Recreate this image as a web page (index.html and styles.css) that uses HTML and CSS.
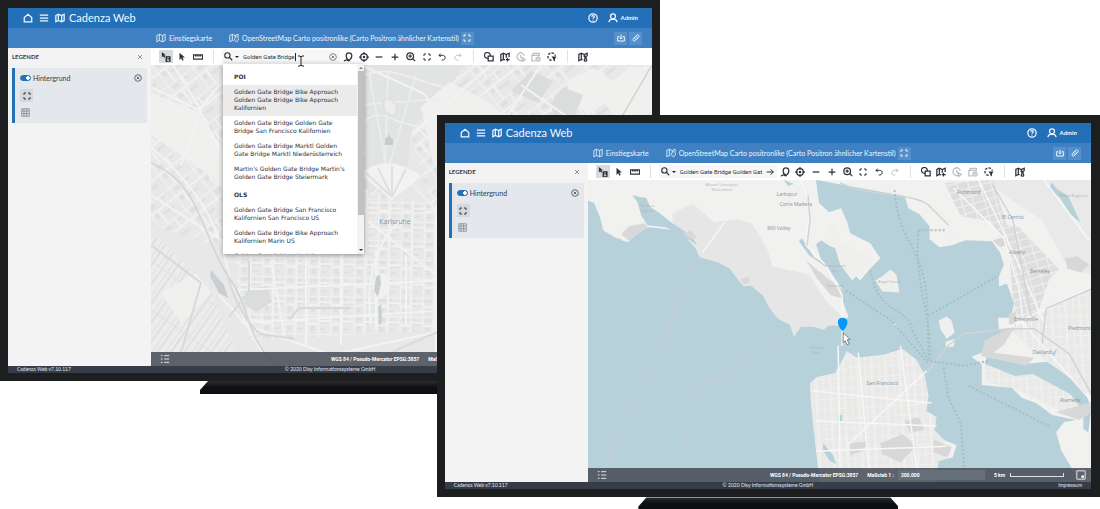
FILE: index.html
```html
<!DOCTYPE html>
<html lang="de">
<head>
<meta charset="utf-8">
<title>Cadenza Web</title>
<link rel="stylesheet" href="styles.css">
</head>
<body>
<svg class="defs" aria-hidden="true">
  <defs>
    <symbol id="home" viewBox="0 0 24 24"><path d="M3 11 12 3l9 8v10H3z"/></symbol>
    <symbol id="menu" viewBox="0 0 24 24"><path d="M2 5h20M2 12h20M2 19h20"/></symbol>
    <symbol id="map" viewBox="0 0 24 24"><path d="M2 6 8 3l8 3 6-3v15l-6 3-8-3-6 3zM8 3v15M16 6v15"/></symbol>
    <symbol id="mappin" viewBox="0 0 24 24"><path d="M11 19l-3-1-6 3V6l6-3 7 3 7-3v6M8 3v15M15 6v4M18 22l-4-5a5 5 0 1 1 8 0zM18 14v1"/></symbol>
    <symbol id="mapplus" viewBox="0 0 24 24"><path d="M12 19l-4-1-6 3V6l6-3 7 3 7-3v9M8 3v15M15 6v8M18 14v9M14 18h9"/></symbol>
    <symbol id="mapgear" viewBox="0 0 24 24"><path d="M11 19l-3-1-6 3V6l6-3 7 3 7-3v7M8 3v15M15 6v6"/><circle cx="18" cy="12" r="2"/><circle cx="18" cy="19" r="3"/></symbol>
    <symbol id="help" viewBox="0 0 24 24"><circle cx="12" cy="12" r="10"/><path d="M9 9c0-4 6-4 6 0 0 3-3 2-3 5M12 16v2"/></symbol>
    <symbol id="user" viewBox="0 0 24 24"><circle cx="12" cy="8" r="6"/><path d="M2 22c1-5 4-7 7-7h6c3 0 6 2 7 7"/></symbol>
    <symbol id="full" viewBox="0 0 24 24"><path d="M3 9V3h6M15 3h6v6M21 15v6h-6M9 21H3v-6"/></symbol>
    <symbol id="save" viewBox="0 0 24 24"><path d="M7 8H2v13h20V8h-5M12 2v13M8 11l4 4 4-4"/></symbol>
    <symbol id="link" viewBox="0 0 24 24"><path d="M10 8l4-4c4-4 9 1 6 6l-5 5c-3 2-6 1-7-2M14 16l-4 4c-4 4-9-1-6-6l5-5c3-2 6-1 7 2"/></symbol>
    <symbol id="close" viewBox="0 0 24 24"><path d="M4 4l16 16M20 4 4 20"/></symbol>
    <symbol id="clear" viewBox="0 0 24 24"><circle cx="12" cy="12" r="10"/><path d="M8 8l8 8M16 8l-8 8"/></symbol>
    <symbol id="table" viewBox="0 0 24 24"><path d="M2 2h20v20H2zM8 2v20M15 2v20M2 8h20M2 15h20"/></symbol>
    <symbol id="pick" viewBox="0 0 24 24"><path class="solid" d="M2 0v13l3-3 3 4 2-2-2-4h4z"/><path class="solid" d="M11 10h12v14H11z"/><path class="cut" d="M17 12v3M15 17h2v4M15 21h5"/></symbol>
    <symbol id="pointer" viewBox="0 0 24 24"><path class="solid" d="M6 2v17l4-4 3 6 3-2-3-6h6z"/></symbol>
    <symbol id="ruler" viewBox="0 0 24 24"><path d="M1 7h22v10H1zM6 7v4M10 7v4M14 7v4M18 7v4"/></symbol>
    <symbol id="search" viewBox="0 0 24 24"><circle cx="9" cy="9" r="7"/><path d="M14 14l8 8"/></symbol>
    <symbol id="arrow" viewBox="0 0 24 24"><path d="M2 12h20M14 4l8 8-8 8"/></symbol>
    <symbol id="place" viewBox="0 0 24 24"><path d="M17 18c6-6 6-16-3-16-8 0-8 10-3 16h3M2 21c3 1 4-2 6-2s3 2 6 2l3-3"/></symbol>
    <symbol id="target" viewBox="0 0 24 24"><circle cx="12" cy="12" r="8"/><circle class="solid" cx="12" cy="12" r="3"/><path d="M12 0v6M12 18v6M0 12h6M18 12h6"/></symbol>
    <symbol id="minus" viewBox="0 0 24 24"><path d="M4 12h16"/></symbol>
    <symbol id="plus" viewBox="0 0 24 24"><path d="M4 12h16M12 4v16"/></symbol>
    <symbol id="zoomin" viewBox="0 0 24 24"><circle cx="10" cy="10" r="8"/><path d="M16 16l6 6M6 10h8M10 6v8"/></symbol>
    <symbol id="undo" viewBox="0 0 24 24"><path d="M8 2 3 7l5 5M3 7h11c10 0 10 14 0 14h-3"/></symbol>
    <symbol id="redo" viewBox="0 0 24 24"><path d="M16 2l5 5-5 5M21 7H10c-10 0-10 14 0 14h3"/></symbol>
    <symbol id="shapes" viewBox="0 0 24 24"><path d="M9 15a7 7 0 1 1 6-6M10 10h12v11H10z"/></symbol>
    <symbol id="clock" viewBox="0 0 24 24"><path d="M14 20A9 9 0 1 1 20 9M8 1h6M11 7v5l4 3M15 14l7 4-7 5z"/></symbol>
    <symbol id="cal" viewBox="0 0 24 24"><path d="M11 21H2V8h18M5 8V3h15v7"/><circle cx="17" cy="17" r="5"/><path d="M17 14v3h2"/></symbol>
    <symbol id="filter" viewBox="0 0 24 24"><path stroke-dasharray="6 3" d="M11 20A9 9 0 1 1 20 9"/><path class="solid" d="M11 11h12l-4 6v6l-4-3v-3z"/></symbol>
    <symbol id="list" viewBox="0 0 24 24"><path d="M2 4h4M10 4h12M2 12h4M10 12h12M2 20h4M10 20h12"/></symbol>
    <symbol id="mini" viewBox="0 0 24 24"><path d="M2 2h20v20H2z"/><path class="solid" d="M13 13h6v6h-6z"/></symbol>
  </defs>
</svg>

<div class="stage">
  <section class="tv tv-back">
    <div class="screen">
      <header class="topbar">
        <button class="ico" aria-label="Start"><svg><use href="#home"/></svg></button>
        <button class="ico" aria-label="Menü"><svg><use href="#menu"/></svg></button>
        <svg class="ico"><use href="#map"/></svg>
        <h1>Cadenza Web</h1>
        <button class="ico push" aria-label="Hilfe"><svg><use href="#help"/></svg></button>
        <button class="account"><svg class="ico"><use href="#user"/></svg>Admin</button>
      </header>
      <nav class="tabs">
        <a href="#start"><svg class="ico"><use href="#map"/></svg>Einstiegskarte</a>
        <a href="#osm"><svg class="ico"><use href="#mappin"/></svg>OpenStreetMap Carto positronlike (Carto Positron ähnlicher Kartenstil)</a>
        <button class="tile" aria-label="Vollbild"><svg><use href="#full"/></svg></button>
        <button class="tile push" aria-label="Speichern"><svg><use href="#save"/></svg></button>
        <button class="tile" aria-label="Link"><svg><use href="#link"/></svg></button>
      </nav>
      <div class="work">
        <aside class="legend">
          <div class="legend-head"><h2>LEGENDE</h2><button aria-label="Schließen"><svg><use href="#close"/></svg></button></div>
          <div class="layer">
            <div class="layer-row"><label><input type="checkbox" checked>Hintergrund</label><button aria-label="Entfernen"><svg><use href="#clear"/></svg></button></div>
            <button class="tile grey" aria-label="Einpassen"><svg><use href="#full"/></svg></button>
            <button class="gridbtn" aria-label="Tabelle"><svg><use href="#table"/></svg></button>
          </div>
        </aside>
        <main class="pane">
          <div class="toolbar">
            <div class="tools">
              <button class="on" aria-label="Info"><svg><use href="#pick"/></svg></button>
              <button aria-label="Auswahl"><svg><use href="#pointer"/></svg></button>
              <button aria-label="Messen"><svg><use href="#ruler"/></svg></button>
            </div>
            <i class="sep"></i>
            <div class="search">
              <svg class="glass"><use href="#search"/></svg><i class="caret"></i>
              <input type="text" aria-label="Suche" value="Golden Gate Bridge">
              <button aria-label="Leeren"><svg class="faint"><use href="#clear"/></svg></button>
              <i class="insertion"></i>
              <svg class="ibeam" viewBox="0 0 8 12"><path d="M1 1h2l1 1 1-1h2M4 2v8M1 11h2l1-1 1 1h2"/></svg>
              <div class="results">
                <div class="results-list">
                  <h3>POI</h3>
                  <button class="hit">Golden Gate Bridge Bike Approach Golden Gate Bridge Bike Approach Kalifornien</button>
                  <button>Golden Gate Bridge Golden Gate Bridge San Francisco Kalifornien</button>
                  <button>Golden Gate Bridge Marktl Golden Gate Bridge Marktl Niederösterreich</button>
                  <button>Martin's Golden Gate Bridge Martin's Golden Gate Bridge Steiermark</button>
                  <h3>OLS</h3>
                  <button>Golden Gate Bridge San Francisco Kalifornien San Francisco US</button>
                  <button>Golden Gate Bridge Bike Approach Kalifornien Marin US</button>
                  <button>Golden Gate Bridge Marktl</button>
                </div>
                <div class="scroll"><i class="up"></i><i class="thumb"></i><i class="down"></i></div>
              </div>
            </div>
            <div class="tools nav-tools">
              <button aria-label="Ort"><svg><use href="#place"/></svg></button>
              <button aria-label="Standort"><svg><use href="#target"/></svg></button>
              <button aria-label="Verkleinern"><svg><use href="#minus"/></svg></button>
              <button aria-label="Vergrößern"><svg><use href="#plus"/></svg></button>
              <button aria-label="Zoomen"><svg><use href="#zoomin"/></svg></button>
              <button aria-label="Gesamtansicht"><svg class="small"><use href="#full"/></svg></button>
              <button aria-label="Zurück"><svg class="small"><use href="#undo"/></svg></button>
              <button aria-label="Vor" disabled><svg class="small"><use href="#redo"/></svg></button>
            </div>
            <i class="sep"></i>
            <div class="tools edit-tools">
              <button aria-label="Geometrie"><svg><use href="#shapes"/></svg></button>
              <button aria-label="Karte hinzufügen"><svg><use href="#mapplus"/></svg></button>
              <button aria-label="Zeit" disabled><svg><use href="#clock"/></svg></button>
              <button aria-label="Kalender" disabled><svg><use href="#cal"/></svg></button>
              <button aria-label="Filter"><svg><use href="#filter"/></svg></button>
            </div>
            <i class="sep"></i>
            <div class="tools"><button aria-label="Karteneinstellungen"><svg><use href="#mapgear"/></svg></button></div>
          </div>
          <div class="map">
            <svg class="chart" viewBox="0 0 501 301" preserveAspectRatio="xMidYMid slice">
              <defs>
                <pattern id="blocks" width="23" height="19" patternUnits="userSpaceOnUse" patternTransform="rotate(1)"><rect width="23" height="19" fill="#e7e8e7"/><path d="M2 2h7v3H2zM13 2h3v7h-3zM3 11h4v5H3zM18 4h2v5h-2zM13 13h5v2h-5z" fill="#dfe1e0"/><path d="M0 0h23M0 0v19M11 0v19M0 9h11M11 6h12" stroke="#f0f1f0" fill="none"/></pattern>
                <pattern id="blocks2" width="31" height="27" patternUnits="userSpaceOnUse" patternTransform="rotate(-38)"><rect width="31" height="27" fill="#e7e8e7"/><path d="M3 3h7v4H3zM14 3h9v2h-9zM3 13h4v5H3zM12 16h12v3H12z" fill="#dfe1e0"/><path d="M0 0h31M0 0v27M17 0v11M0 11h31M9 11v16" stroke="#f0f1f0" fill="none"/></pattern>
                <pattern id="allot" width="11" height="40" patternUnits="userSpaceOnUse" patternTransform="rotate(35)"><rect width="11" height="40" fill="#ebeceb"/><path d="M0 0v40M5 0v40M0 0h11" stroke="#dfe1e0" fill="none"/></pattern>
              </defs>
              <rect width="501" height="301" fill="#e7e8e7"/>
              <path d="M0 0h90l55 100-20 100L0 160z" fill="url(#blocks2)"/>
              <path d="M205 0h110l-30 36-25 30-5 55-50 60z" fill="#e1e4e2"/>
              <path d="M85 150l60 10 50-40 90 20 15 20v105l-200 10-15-60z" fill="url(#blocks)"/>
              <path d="M0 165l60 60 30 75H0z" fill="url(#allot)"/>
              <path d="M315 0h186v160H285l-25-90z" fill="url(#blocks2)"/>
              <path d="M0 28l45 18 40 55-25 10L0 70zM64 80l35 4-2 40-18 11-18-25zM270 42l28-25 40 20 20 20-40 30-35 15zM10 228l35-20 15 20-30 30zM418 15l25-12 23 17-28 30-22-16zM448 30l30-28h23v45l-30 15z" fill="#f0f0ef"/>
              <path d="M360 26l20-20 22 10-15 22zM400 38l12-16 20 8-10 26-18 4zM95 225l22-4 4 16-16 10-12-8z" fill="#dadddb"/>
              <path d="M207 13c30-16 52 2 90 10M214 90c-12-40 10-45 30-35s40 0 45 30M207 148l38-48 42 48z" fill="none" stroke="#eff0ef" stroke-width="1.500"/>
              <path d="M237 5l-3 103M265 10l-28 95M218 8l18 98M208 40l80-6" stroke="#eaedeb"/>
              <path d="M209 109c20-16 38-13 62 2l-30 24-32-26" fill="#f2f2f1"/>
              <path d="M215 108l26 24M227 103l14 29M241 101v31M255 104l-14 28" stroke="#dfe1e0"/>
              <g fill="none" stroke="#f2f3f2" stroke-width="2">
                <path d="M0 22 48 45 90 125M22 0l28 45L30 100M0 82c40 35 65 70 75 115s20 65 45 104M0 130l70 45 70-10M85 0 48 45M120 195l14 80M155 190v90M85 225l215-10M90 258l210-13M68 230l27 30 85 30 120-26M190 190v90M225 185v80M255 190v70M285 140v160M215 155l70 55M250 155c-30 25-35 70-30 105M210 0l62 28 30 40M340 0l-78 68M390 0l-40 60M501 110 370 20"/>
              </g>
              <path d="M0 98c50 20 50 72 77 113 25 35 14 55 48 90M501 0l-35 60-45 40" fill="none" stroke="#d0d4d3" stroke-width="1.500"/>
              <path d="M0 180l50 38-20 70M75 205c8 30 18 50 34 64l35 5M225 295c50-25 70-30 76-35M98 196v30l-20 26M138 255l10-12 52 0" fill="none" stroke="#d7dad8"/>
              <path d="M60 205l13 15 4 13-9-5-9-17z" fill="#c8cfd2"/>
              <ellipse cx="230" cy="220" rx="9" ry="12" fill="#f0f1f0"/>
              <path d="M225 212l4-3 1 9-3 14-4-6zM227 242l3-3 1 18-3 4z" fill="#c8cfd2"/>
              <path d="M187 72l5 5h-8zM234 80v-7l3-1 1-3 2 4 2 1v6z" fill="#c6cdcf"/>
              <ellipse cx="239" cy="42" rx="6" ry="9" transform="rotate(-25 239 42)" fill="#ecedec" stroke="#dfe1e0"/>
              <g class="labels"><text x="244" y="159" class="city">Karlsruhe</text></g>
            </svg>
            <div class="status">
              <button aria-label="Liste"><svg><use href="#list"/></svg></button>
              <span class="push">WGS 84 / Pseudo-Mercator EPSG:3857</span>
              <label>Maßstab 1 : <input type="text" value="10.000"></label>
              <span>1 km</span><i class="scale"></i>
              <button class="mini" aria-label="Übersicht"><svg><use href="#mini"/></svg></button>
            </div>
          </div>
        </main>
      </div>
      <footer class="foot"><span>Cadenza Web v7.10.117</span><span>© 2020 Disy Informationssysteme GmbH</span><a href="#impressum">Impressum</a></footer>
    </div>
    <div class="stand"></div>
  </section>

  <section class="tv tv-front">
    <div class="screen">
      <header class="topbar">
        <button class="ico" aria-label="Start"><svg><use href="#home"/></svg></button>
        <button class="ico" aria-label="Menü"><svg><use href="#menu"/></svg></button>
        <svg class="ico"><use href="#map"/></svg>
        <h1>Cadenza Web</h1>
        <button class="ico push" aria-label="Hilfe"><svg><use href="#help"/></svg></button>
        <button class="account"><svg class="ico"><use href="#user"/></svg>Admin</button>
      </header>
      <nav class="tabs">
        <a href="#start"><svg class="ico"><use href="#map"/></svg>Einstiegskarte</a>
        <a href="#osm"><svg class="ico"><use href="#mappin"/></svg>OpenStreetMap Carto positronlike (Carto Positron ähnlicher Kartenstil)</a>
        <button class="tile" aria-label="Vollbild"><svg><use href="#full"/></svg></button>
        <button class="tile push" aria-label="Speichern"><svg><use href="#save"/></svg></button>
        <button class="tile" aria-label="Link"><svg><use href="#link"/></svg></button>
      </nav>
      <div class="work">
        <aside class="legend">
          <div class="legend-head"><h2>LEGENDE</h2><button aria-label="Schließen"><svg><use href="#close"/></svg></button></div>
          <div class="layer">
            <div class="layer-row"><label><input type="checkbox" checked>Hintergrund</label><button aria-label="Entfernen"><svg><use href="#clear"/></svg></button></div>
            <button class="tile grey" aria-label="Einpassen"><svg><use href="#full"/></svg></button>
            <button class="gridbtn" aria-label="Tabelle"><svg><use href="#table"/></svg></button>
          </div>
        </aside>
        <main class="pane">
          <div class="toolbar">
            <div class="tools">
              <button class="on" aria-label="Info"><svg><use href="#pick"/></svg></button>
              <button aria-label="Auswahl"><svg><use href="#pointer"/></svg></button>
              <button aria-label="Messen"><svg><use href="#ruler"/></svg></button>
            </div>
            <i class="sep"></i>
            <div class="search">
              <svg class="glass"><use href="#search"/></svg><i class="caret"></i>
              <input type="text" aria-label="Suche" value="Golden Gate Bridge Golden Gat">
              <button aria-label="Suchen"><svg><use href="#arrow"/></svg></button>
            </div>
            <div class="tools nav-tools">
              <button aria-label="Ort"><svg><use href="#place"/></svg></button>
              <button aria-label="Standort"><svg><use href="#target"/></svg></button>
              <button aria-label="Verkleinern"><svg><use href="#minus"/></svg></button>
              <button aria-label="Vergrößern"><svg><use href="#plus"/></svg></button>
              <button aria-label="Zoomen"><svg><use href="#zoomin"/></svg></button>
              <button aria-label="Gesamtansicht"><svg class="small"><use href="#full"/></svg></button>
              <button aria-label="Zurück"><svg class="small"><use href="#undo"/></svg></button>
              <button aria-label="Vor" disabled><svg class="small"><use href="#redo"/></svg></button>
            </div>
            <i class="sep"></i>
            <div class="tools edit-tools">
              <button aria-label="Geometrie"><svg><use href="#shapes"/></svg></button>
              <button aria-label="Karte hinzufügen"><svg><use href="#mapplus"/></svg></button>
              <button aria-label="Zeit" disabled><svg><use href="#clock"/></svg></button>
              <button aria-label="Kalender" disabled><svg><use href="#cal"/></svg></button>
              <button aria-label="Filter"><svg><use href="#filter"/></svg></button>
            </div>
            <i class="sep"></i>
            <div class="tools"><button aria-label="Karteneinstellungen"><svg><use href="#mapgear"/></svg></button></div>
          </div>
          <div class="map">
            <svg class="chart" viewBox="0 0 503 301" preserveAspectRatio="xMidYMid slice">
              <defs>
                <pattern id="grid" width="14" height="10" patternUnits="userSpaceOnUse" patternTransform="rotate(-3)"><rect width="14" height="10" fill="#e9e9e8"/><path d="M0 0h14M0 0v10M7 0v10" stroke="#f0f0f0" fill="none"/></pattern>
                <pattern id="grid2" width="11" height="8" patternUnits="userSpaceOnUse" patternTransform="rotate(-16)"><rect width="11" height="8" fill="#dedede"/><path d="M0 0h11M0 0v8" stroke="#f0f0f0" fill="none"/></pattern>
              </defs>
              <rect width="503" height="301" fill="#f1f1f0"/>
              <path d="M85 33l20-9 22 18 22-3 15 4 15 25 6 18 36 8 16 25 18 18-5 30-50-4-30-30-22-20-30-20-32-28z" fill="#e6e6e6"/>
              <path d="M395 0h108v95l-25-10-25-45-30-20z" fill="#e8e9e8"/>
              <path d="M356 3l48-3 14 45 12 2 40 42-10 10-14 42h-20l-6-70-18-30-30-5z" fill="url(#grid2)"/>
              <path d="M429 145l75-40v110l-60-45-24-22zM395 180l55 8 45 35-10 14-50-25-40-12z" fill="url(#grid)"/>
              <path d="M254 166l68-6 24 45 18 96H230l-9-103 25-10z" fill="url(#grid)"/>
              <g fill="#b7d1da">
                <path d="M0 20l7 3 6 14 3 13 15 9 10 3 7-7 12-8 12 1 21 3 15 17 4 9 18 5 12 6 8 11 6 7 7-1 12 10 7 13 8 10 12 6 4 12 7-10 12 0 11 3 4-4 16 0 3 23-3 8-9 16-18 4-7 6 1 22 4 37 5 44H0z"/>
                <path d="M45 15l8 2 6 1 4 9 8 5 14 11 18 12 7 10-12-8-20-10-18-2-6-10-4-13z"/>
                <path d="M228 0l3 23 10 9 12-4 6 14 3 11 20 10 10 15-10 10-10 12-13-12-5-18-12-4-9-6-5 4 6 18-8-5-12-19-3 3 10 14 19 13 13 19 2 15 5 13-4 8-2 9 4 18 11 7 26-3 19-6 14 11 8 15 4 20-2 16 10 6-2 13 10 10 12 5-4 12-14 4-3 23h145l-20-34-5-18 8-10 12-2-24-5-16-12-14-5-10-10-30-3v-20l-10-8 17-7 18-13 6-8-14 1-1-12h13l3-14-7-20-8 3 0-10 5-12-4-12-8-11-26-1-14 5-12 2-10-8 0-13-10-12-11-6-4-12z"/>
                <path d="M398 176l40 7 20-2 16 11 12 9 10 10 6 16-3 24-5-3 0-18-13-17-17-9-20-11-18 2-30-12zM462 2l6 7 11 7 12 26-10-8-10-16-10-8zM462 173l6-5-3 8z"/>
                <path d="M235 262l10 12 3 9-7-4-6-10zM196 0l10 4-6 2zM250 234h4v6h-4z"/>
              </g>
              <path d="M236 60l8-18 10 20 18 8 14 12-10 6-12 12-12-16-5-16zM287 100l8-5 7-6 6 5 3 18-17-1zM350 140l8-4 5 4 3 12-8 6-6-9zM357 161l9-3-1 8h-8zM305 142l5 3-3 1zM358 54l9 0 5 8-6-3z" fill="#efefee"/>
              <path d="M34 54l8-8 15-3 3 4-13 9-5 5zM96 53l8-3 5 7-6 2zM153 99l8-3 1 6-6 2zM218 80l12 10 23 18 2 10-12-3-14-17zM396 160l23-12 6 0-10 16-10 8 40 5-8 8-45-10zM467 231l36-10v10l-13 8zM345 258l18 8-4 10-14-5zM420 133l7-2v14l-7-2zM292 262l22-9 14 12-16 16-18-8zM316 240l14-4 6 12-14 4zM262 262l18-2-6 10-12 4zM476 78l12-2 12 8-8 8-14-4zM404 60l10-3 3 8-6 2z" fill="#d8d8d8"/>
              <g fill="none" stroke="#f7f7f6" stroke-width="1.500"><path d="M213 0l9 25-4 40 20 20 16 30v50M250 165l2 136M270 172l12 129M312 165l18 136M225 210l118 12M228 240l120 5M228 270l130-5M338 190l-80 75M365 8l50 50 15 50 5 40M455 0l45 60M420 146l30-15 53-25M432 140l70 80M390 0l38 80 28 65M115 72l22-30"/></g>
              <path d="M252 3c30 14 70 9 88 22l20 20M338 192l21-27 16-12 45-5 25 0 35 25 22 40M404 5l20 35 18 95M503 108l-46 20-4 35M220 15l2 25-3 25" fill="none" stroke="#d1d4d4" stroke-width="1.500"/>
              <path d="M0 34l11 8 3 13 20 5M111 78 18 288M206 156 91 216l12 72" fill="none" stroke="#c1cfd3"/>
              <path d="M306 10c5 60 30 50 33 120l1 50M330 50c-5 50 12 80 12 128M258 110l45 30 36 42M282 90c10 50 35 30 43 62l15 28 36 5 24-5M340 135l70-40M355 187l5 30 12 25 4 50M380 205l80 40M330 50l26 0" fill="none" stroke="#a6bfc7" stroke-dasharray="2 2"/>
              <g class="labels">
                <text x="294" y="204">San Francisco</text><text x="453" y="173">Oakland</text><text x="451" y="93">Berkeley</text><text x="380" y="14">Richmond</text><text x="424" y="39">El Cerrito</text><text x="428" y="74">Albany</text><text x="437" y="140">Emeryville</text><text x="490" y="149">Piedmont</text><text x="481" y="221">Alameda</text><text x="191" y="50">Mill Valley</text><text x="199" y="16">Larkspur</text><text x="208" y="26">Corte Madera</text>
                <g class="pale"><text x="134" y="6">Mount Tamalpais</text><text x="134" y="11">Watershed</text><text x="301" y="103">Angel Island</text><text x="60" y="27">Bolinas</text><text x="60" y="32">Lagoon</text><text x="229" y="168">Golden</text><text x="229" y="173">Gate</text><text x="247" y="87">Richardson</text><text x="247" y="92">Bay</text><text x="484" y="17">Tilden Regional</text><text x="247" y="107">Sausalito</text></g>
              </g>
              <path d="M254.500 149c-5-5-5-11 0-11s5 6 0 11z" fill="#0a96fa" stroke="#0a96fa"/>
              <path d="M255 152v10l2-2 2 4 2-1-2-4h3z" fill="#fff" stroke="#555" stroke-width=".7"/>
            </svg>
            <div class="status">
              <button aria-label="Liste"><svg><use href="#list"/></svg></button>
              <span class="push">WGS 84 / Pseudo-Mercator EPSG:3857</span>
              <label>Maßstab 1 : <input type="text" value="200.000"></label>
              <span>5 km</span><i class="scale"></i>
              <button class="mini" aria-label="Übersicht"><svg><use href="#mini"/></svg></button>
            </div>
          </div>
        </main>
      </div>
      <footer class="foot"><span>Cadenza Web v7.10.117</span><span>© 2020 Disy Informationssysteme GmbH</span><a href="#impressum">Impressum</a></footer>
    </div>
    <div class="stand"></div>
  </section>
</div>
</body>
</html>
```
FILE: styles.css
```css
* { box-sizing: border-box; }
body { margin: 0; background: #fff; color: #333b45; font: 7px/10px Lato, "Liberation Sans", sans-serif; }
button, input { margin: 0; padding: 0; border: 0; background: none; color: inherit; font: inherit; }
button { display: flex; align-items: center; justify-content: center; flex: none; }
h1, h2, h3 { margin: 0; font-weight: 400; }
a { color: inherit; text-decoration: none; }
svg { display: block; fill: none; stroke: currentColor; stroke-width: 2; }
button svg { width: 10px; height: 10px; }
.solid { fill: currentColor; stroke: none; }
.cut { stroke: #fff; stroke-width: 2; }
.defs { position: absolute; width: 0; height: 0; }
.push { margin-left: auto; }

.stage { position: relative; min-height: 100vh; overflow: hidden; }
.tv { position: absolute; }
.tv-back { top: 0; left: 0; width: 60%; }
.tv-front { top: 115px; left: 39.7%; right: 0; }
.screen { border: 8px solid #1c1e20; background: #f3f3f3; }
.tv-front .screen { border-right-width: 9px; }
.stand { width: 260px; height: 13px; margin: 0 auto; background: linear-gradient(#2b2d30, #0d0f12 50%); clip-path: polygon(8px 0, 252px 0, 100% 9px, 100% 100%, 0 100%, 0 9px); }

.topbar { display: flex; align-items: center; gap: 6px; height: 20px; padding: 0 14px 0 15px; background: #2470b8; color: #f2f7fc; }
.topbar h1 { margin-left: -2px; font-size: 11px; line-height: 20px; white-space: nowrap; }
.topbar svg { stroke-width: 3; }
.ico { width: 10px; height: 10px; flex: none; }
.account { gap: 3px; margin-left: 4px; font-size: 6px; font-weight: 700; }
.tabs { display: flex; align-items: center; gap: 2px; height: 20px; padding: 0 10px 0 148px; background: #3e80c1; color: #eef5fb; }
.tabs a { display: flex; align-items: center; gap: 3px; white-space: nowrap; }
.tabs a + a { margin-left: 15px; }
.tile { width: 13px; height: 13px; background: #5590ca; }
.tile svg { width: 8px; height: 8px; stroke-width: 3; }

.work { display: grid; grid-template-columns: 143px minmax(0, 1fr); }
.legend { padding: 0 4px; }
.legend-head { display: flex; align-items: center; justify-content: space-between; height: 20px; padding: 0 4px 2px 0; }
.legend-head svg { width: 6px; height: 6px; }
.legend h2 { font-size: 6px; font-weight: 700; }
.layer { display: flex; flex-direction: column; align-items: flex-start; gap: 6px; padding: 5px 5px 6px; border-left: 3px solid #2470b8; background: #e4e8ec; }
.layer-row { display: flex; align-items: center; justify-content: space-between; width: 100%; height: 10px; }
.layer-row label { display: flex; align-items: center; gap: 2px; }
.layer-row svg { width: 8px; height: 8px; color: #666d75; stroke-width: 3; }
.layer-row input { appearance: none; width: 11px; height: 6px; border: 1px solid #2470b8; border-radius: 3px; background: radial-gradient(circle at 7px 2px, #fff 2px, #2470b8 2px); }
.tile.grey { background: #d5d9dd; }
.gridbtn { margin-left: 1px; color: #7b8289; }
.gridbtn svg { width: 9px; height: 9px; }

.toolbar { display: flex; align-items: center; height: 17px; padding-left: 8px; background: #fff; color: #2b323b; }
.tools { display: flex; justify-content: space-between; gap: 2px; }
.tools button { width: 14px; height: 13px; }
.tools svg { stroke-width: 3; }
.tools .small { width: 8px; height: 8px; }
.tools .on { background: #d8dbde; }
.tools button:disabled { color: #bcbfc2; }
.tools.nav-tools { width: 124px; margin-left: 1px; gap: 0; }
.tools.edit-tools { width: 77px; gap: 0; }
.sep { width: 1px; height: 13px; margin: 0 8px; background: #dfe1e3; }
.search { position: relative; display: flex; align-items: center; width: 118px; height: 13px; padding-left: 2px; background: #f6f6f7; }
.glass { width: 9px; height: 9px; flex: none; stroke-width: 3; }
.caret { margin: 0 4px 0 2px; border: 2px solid transparent; border-top-color: #222; border-bottom: 0; }
.search input { flex: 1; min-width: 0; height: 12px; font-family: Roboto, sans-serif; font-size: 6px; }
.search > button { width: 14px; }
.search > button svg { width: 8px; height: 8px; stroke-width: 3; }
.faint { color: #888; }
.insertion { position: absolute; left: 73px; top: 3px; width: 1px; height: 8px; background: #222; }
.ibeam { position: absolute; z-index: 3; left: 75px; top: 5px; width: 8px; height: 12px; stroke: #222; stroke-width: 1; }
.results { position: absolute; z-index: 2; top: 14px; left: 1px; display: flex; width: 141px; height: 190px; background: #fff; box-shadow: 0 1px 5px rgba(0, 0, 0, .4); overflow: hidden; }
.results-list { flex: 1; padding-top: 3px; font: 6px/8px "DejaVu Sans", sans-serif; overflow: hidden; }
.results h3 { padding: 6px 11px 4px; font-size: 6px; line-height: 8px; font-weight: 700; }
.results button { display: block; width: 100%; padding: 3px 6px 4px 11px; text-align: left; }
.results .hit { background: #ebebec; }
.scroll { display: flex; flex-direction: column; align-items: center; width: 7px; background: #f3f3f3; }
.up, .down { margin: 3px 0 2px; border: 2px solid transparent; border-top-width: 0; border-bottom-color: #777; }
.thumb { width: 6px; height: 144px; background: #c1c1c1; }
.down { margin: auto 0 3px; border-width: 2px 2px 0; border-color: #333 transparent transparent; }

.map { position: relative; aspect-ratio: 501 / 301; overflow: hidden; }
.chart { width: 100%; height: 100%; stroke: none; }
.labels { fill: #84939f; stroke: none; font: 5px "Open Sans", sans-serif; text-anchor: middle; }
.city { font-size: 7px; }
.pale { fill: #b3b3b3; font-size: 4px; }
.status { position: absolute; inset: auto 0 0; display: flex; align-items: center; height: 14px; padding: 0 5px 0 9px; background: rgba(70, 76, 86, .86); color: #fff; font-family: Roboto, sans-serif; font-size: 5px; font-weight: 700; white-space: nowrap; }
.status label { display: flex; align-items: center; gap: 4px; margin: 0 9px; }
.status input { width: 87px; height: 10px; padding-left: 3px; background: #65707b; }
.scale { width: 54px; height: 4px; margin: 0 12px 0 5px; border: 1px solid #dde1e4; border-top: 0; }
.foot { display: grid; grid-template-columns: 1fr auto 1fr; height: 7px; padding: 0 9px; background: #363d49; color: #e4e7eb; font-size: 5px; line-height: 7px; }
.foot a { text-align: right; }
```
